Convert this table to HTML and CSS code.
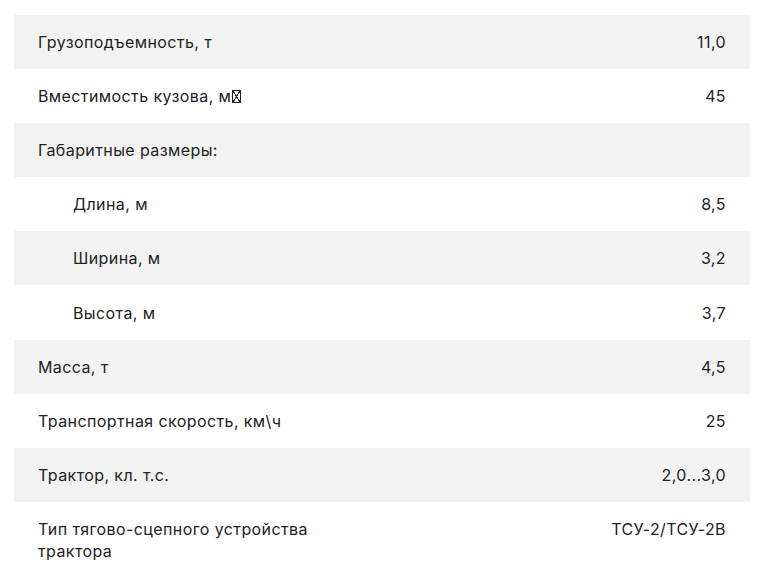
FILE: index.html
```html
<!DOCTYPE html>
<html lang="ru">
<head>
<meta charset="utf-8">
<link rel="stylesheet" href="styles.css">
</head>
<body>
<div class="specs">
  <div class="row grey"><span class="name">Грузоподъемность, т</span><span class="val">11,0</span></div>
  <div class="row"><span class="name">Вместимость кузова, м<span class="tofu"></span></span><span class="val">45</span></div>
  <div class="row grey"><span class="name">Габаритные размеры:</span><span class="val"></span></div>
  <div class="row sub"><span class="name">Длина, м</span><span class="val">8,5</span></div>
  <div class="row grey sub"><span class="name">Ширина, м</span><span class="val">3,2</span></div>
  <div class="row sub"><span class="name">Высота, м</span><span class="val">3,7</span></div>
  <div class="row grey"><span class="name">Масса, т</span><span class="val">4,5</span></div>
  <div class="row"><span class="name">Транспортная скорость, км\ч</span><span class="val">25</span></div>
  <div class="row grey"><span class="name">Трактор, кл. т.с.</span><span class="val">2,0...3,0</span></div>
  <div class="row"><span class="name">Тип тягово-сцепного устройства трактора</span><span class="val">ТСУ-2/ТСУ-2В</span></div>
</div>
</body>
</html>
```
FILE: styles.css
```css
html, body { margin: 0; padding: 0; background: #fff; }
body { padding: 15px 22px 0 14px; font-family: Inter, "Open Sans", sans-serif; font-size: 16px; letter-spacing: 0.4px; color: #222; }
.specs { display: flex; flex-direction: column; }
.row { display: flex; justify-content: space-between; align-items: flex-start; padding: 16.05px 24px; line-height: 22px; }
.row.grey { background: #f2f2f2; }
.row.sub .name { padding-left: 35px; }
.name { max-width: 300px; }
.val { text-align: right; white-space: nowrap; }
.tofu { display: inline-block; width: 7px; height: 11px; border: 1px solid #222; vertical-align: -1px; margin-left: 1px;
  background: linear-gradient(to bottom right, transparent 45%, #222 45%, #222 55%, transparent 55%),
              linear-gradient(to bottom left, transparent 45%, #222 45%, #222 55%, transparent 55%); }
```
